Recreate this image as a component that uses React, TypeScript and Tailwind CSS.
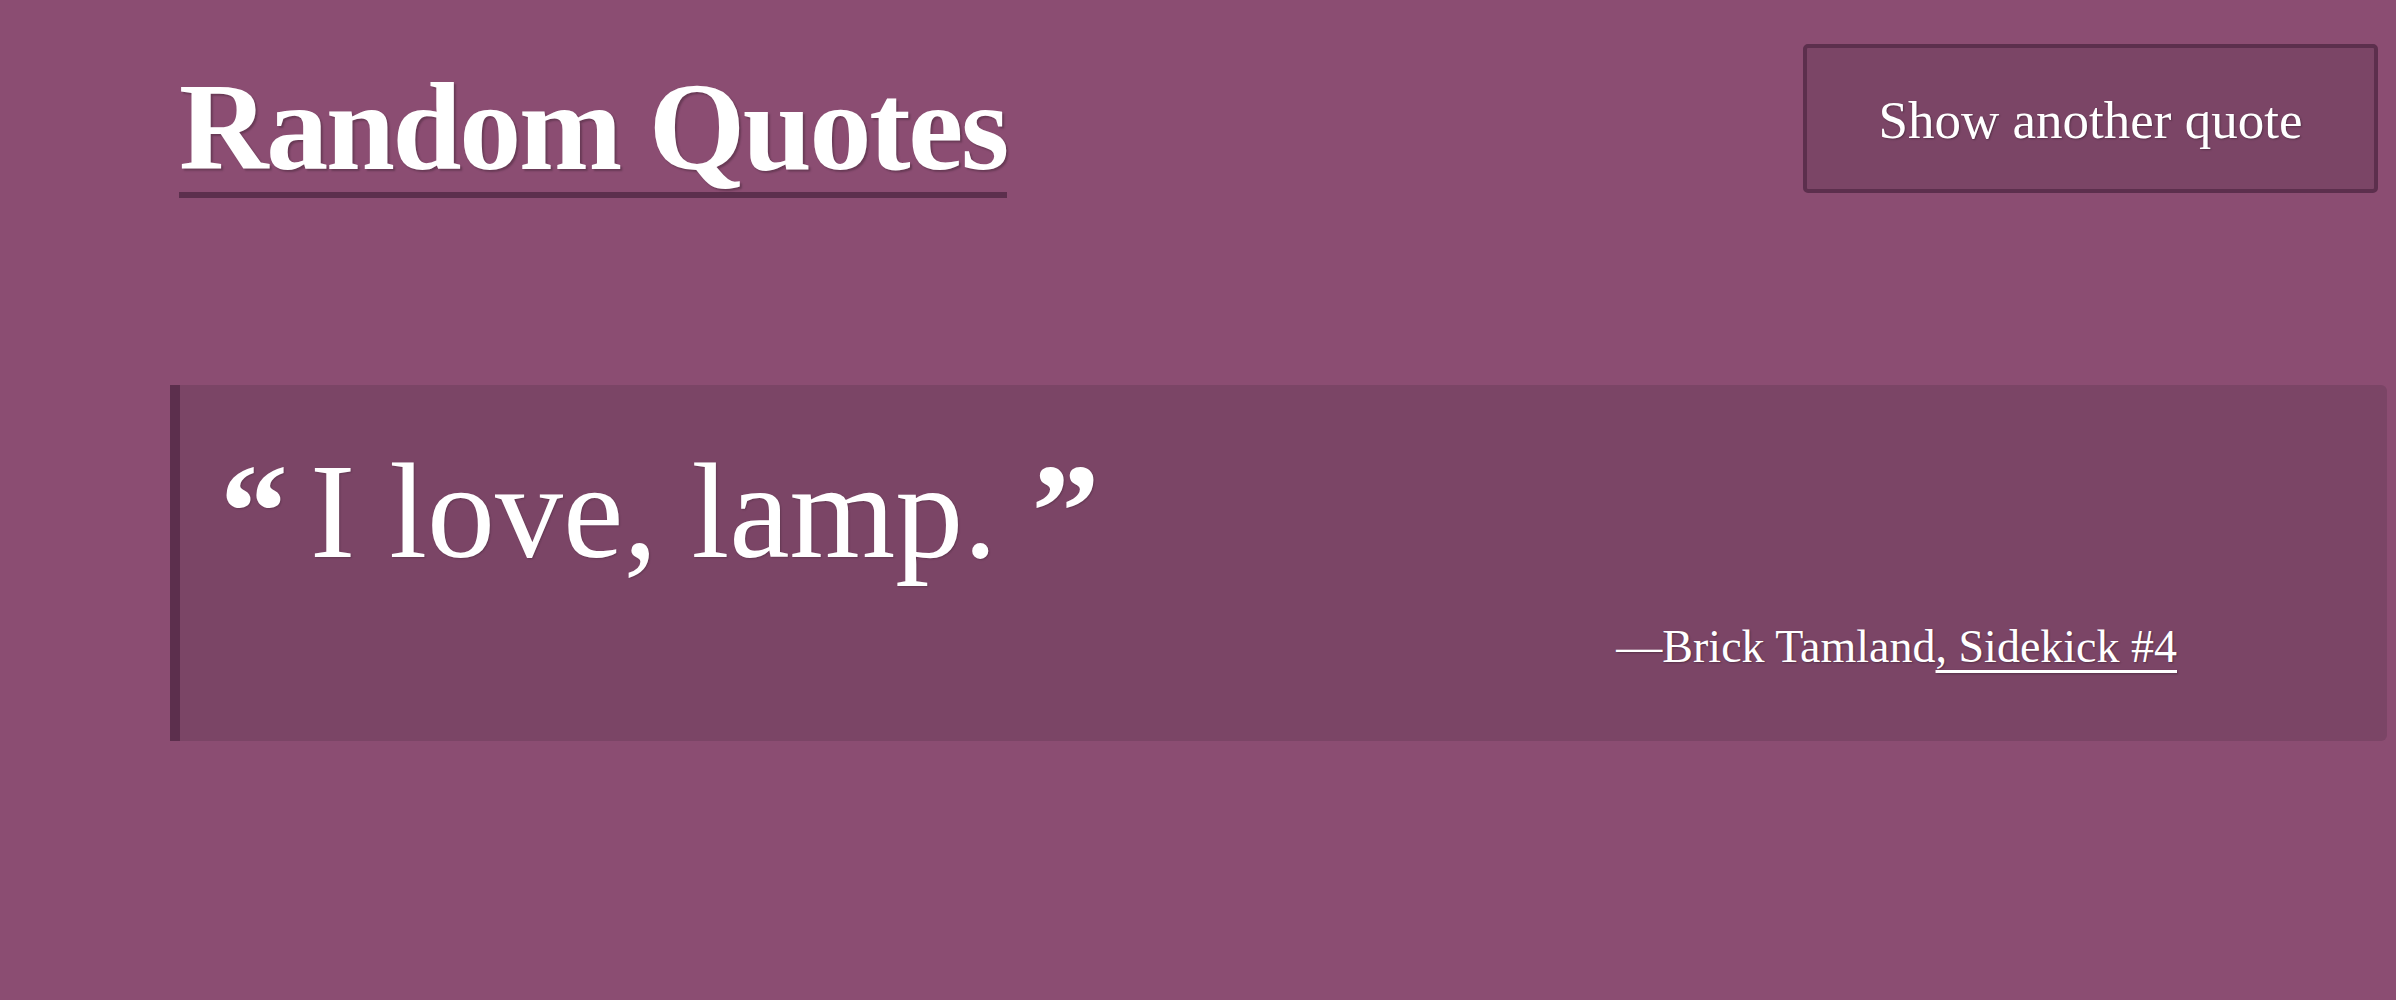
export default function App() {
  return (
    <div className="min-h-[1000px] w-full bg-[#8b4d72] pl-[170px] pr-[9px] text-white [font-family:'Liberation_Serif',serif]">
      <header className="flex items-start justify-between pt-[44px]">
        <h1 className="ml-[9px] mt-[22px] border-b-[6px] border-[#5c2f4d] pb-[2px] text-[124px] leading-none font-bold tracking-[-2.3px] [text-shadow:2px_2px_2px_rgba(0,0,0,0.25)]">
          Random Quotes
        </h1>
        <button className="mr-[9px] flex h-[149px] w-[575px] items-center justify-center rounded-[5px] border-[4px] border-[#5c2f4d] bg-[#7b4566] pt-[4px] text-[53px] leading-none text-white [text-shadow:1px_1px_2px_rgba(0,0,0,0.3)]">
          Show another quote
        </button>
      </header>
      <blockquote className="mt-[187px] h-[356px] rounded-r-[6px] border-l-[10px] border-[#5c2f4d] bg-[#7b4566] pl-[40px] pt-[58px]">
        <p className="text-[136px] leading-none [text-shadow:1px_1px_2px_rgba(0,0,0,0.2)]">
          <span className="mr-[22px] font-bold">“</span>I love, lamp.<span className="ml-[34px] font-bold">”</span>
        </p>
        <footer className="mt-[45px] flex justify-end pr-[210px] text-[46px] leading-none [text-shadow:1px_1px_2px_rgba(0,0,0,0.3)]">
          <span className="ml-[-4px]">
            —Brick Tamland<cite className="not-italic underline decoration-[3px] underline-offset-[8px]">, Sidekick #4</cite>
          </span>
        </footer>
      </blockquote>
    </div>
  );
}
